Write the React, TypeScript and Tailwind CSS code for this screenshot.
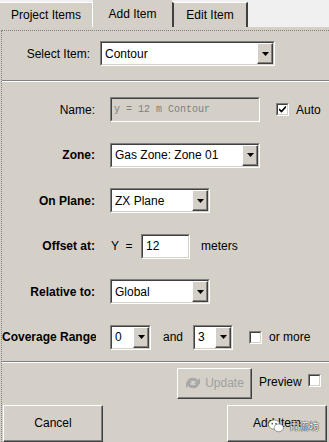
import type { ReactNode } from 'react'

const sunken =
  'border border-t-[#808080] border-l-[#808080] border-b-white border-r-white'
const sunkenInner =
  'border border-t-[#404040] border-l-[#404040] border-b-[#d4d0c8] border-r-[#d4d0c8]'
const raised =
  'border border-t-white border-l-white border-b-[#404040] border-r-[#404040] shadow-[inset_-1px_-1px_#808080] bg-[#d4d0c8]'

function Arrow() {
  return (
    <svg width="7" height="4" viewBox="0 0 7 4">
      <polygon points="0,0 7,0 3.5,4" fill="#000" />
    </svg>
  )
}

function Dropdown({ value, className }: { value: string; className: string }) {
  return (
    <div className={`${sunken} h-[25px] ${className}`}>
      <div className={`${sunkenInner} flex h-full bg-white`}>
        <span className="flex flex-1 items-center overflow-hidden whitespace-nowrap pl-[3px]">{value}</span>
        <div className={`${raised} flex w-[16px] items-center justify-center`}>
          <Arrow />
        </div>
      </div>
    </div>
  )
}

function Checkbox({ checked }: { checked?: boolean }) {
  return (
    <div className={`${sunken} h-[13px] w-[13px]`}>
      <div className={`${sunkenInner} flex h-full w-full items-center justify-center bg-white`}>
        {checked ? (
          <svg width="7" height="7" viewBox="0 0 7 7">
            <path d="M0 3 L2.5 5.5 L7 0.5" stroke="#000" strokeWidth="1.6" fill="none" />
          </svg>
        ) : null}
      </div>
    </div>
  )
}

function Row({ label, bold, children }: { label: string; bold?: boolean; children: ReactNode }) {
  return (
    <div className="flex h-[25px] items-center">
      <div
        className={`flex w-[94px] shrink-0 overflow-hidden whitespace-nowrap pr-[1px] ${
          label.length > 13 ? 'justify-start' : 'justify-end'
        } ${bold ? 'font-bold' : ''}`}
      >
        {label}
      </div>
      <div className="ml-[14px] flex items-center">{children}</div>
    </div>
  )
}

export default function App() {
  return (
    <div
      className="relative h-[442px] w-[329px] overflow-hidden bg-[#f0f0f0] text-[12px] text-black"
      style={{ fontFamily: '"Liberation Sans", Arial, sans-serif' }}
    >
      {/* tabs */}
      <div className="flex h-[27px] items-end">
        <div className="flex h-[25px] w-[93px] items-center justify-center border-t border-r border-white bg-[#d4d0c8]">
          Project Items
        </div>
        <div className="flex h-[27px] w-[79px] items-center justify-center bg-[#d4d0c8] pt-[1px]">Add Item</div>
        <div className="flex h-[25px] w-[76px] items-center justify-center border-t border-t-white border-x-[2px] border-x-[#404040] bg-[#d4d0c8]">
          Edit Item
        </div>
      </div>

      <div className="h-[415px] bg-[#d4d0c8] pt-[3px]">
        <div className="ml-[1px] h-full border-t border-l border-dotted border-[#808080]">
          {/* select item */}
          <div className="mt-[10px] flex h-[25px] items-center">
            <div className="flex w-[88px] justify-end">Select Item:</div>
            <Dropdown value="Contour" className="ml-[10px] w-[175px]" />
          </div>

          <div className="mt-[14px] h-[2px] border-t border-b border-t-[#808080] border-b-white" />

          {/* form */}
          <div className="mt-[15px] flex flex-col gap-[20.6px]">
            <Row label="Name:">
              <div className={`${sunken} h-[25px] w-[150px]`}>
                <div
                  className={`${sunkenInner} flex h-full items-center pl-[2px] text-[10px] text-[#808080]`}
                  style={{ fontFamily: '"Liberation Mono", "Courier New", monospace' }}
                >
                  y = 12 m Contour
                </div>
              </div>
              <div className="ml-[16px] flex items-center gap-[7px]">
                <Checkbox checked />
                <span>Auto</span>
              </div>
            </Row>
            <Row label="Zone:" bold>
              <Dropdown value="Gas Zone: Zone 01" className="w-[150px]" />
            </Row>
            <Row label="On Plane:" bold>
              <Dropdown value="ZX Plane" className="w-[100px]" />
            </Row>
            <Row label="Offset at:" bold>
              <span className="w-[31px] whitespace-pre pl-[1px]">Y  =</span>
              <div className={`${sunken} h-[25px] w-[49px]`}>
                <div className={`${sunkenInner} flex h-full items-center bg-white pl-[3px]`}>12</div>
              </div>
              <span className="ml-[11px]">meters</span>
            </Row>
            <Row label="Relative to:" bold>
              <Dropdown value="Global" className="w-[100px]" />
            </Row>
            <Row label="Coverage Range" bold>
              <Dropdown value="0" className="w-[41px]" />
              <span className="ml-[12px]">and</span>
              <Dropdown value="3" className="ml-[10px] w-[40px]" />
              <div className="ml-[16px] flex items-center gap-[7px]">
                <Checkbox />
                <span>or more</span>
              </div>
            </Row>
          </div>

          <div className="mt-[11px] h-[2px] border-t border-b border-t-[#808080] border-b-white" />

          {/* update row */}
          <div className="mt-[5px] flex h-[31px] items-center">
            <div className={`${raised} ml-[175px] flex h-[31px] w-[75px] items-center justify-center gap-[4px] text-[#a0a0a0]`}>
              <svg width="16" height="14" viewBox="0 0 16 14">
                <path d="M2 6 A6 5 0 0 1 13 4 L15 2 L15 8 L9 8 L11 6 A4 3 0 0 0 4 7 Z" fill="#a8a8a8" />
                <path d="M14 8 A6 5 0 0 1 3 10 L1 12 L1 6 L7 6 L5 8 A4 3 0 0 0 12 7 Z" fill="#a8a8a8" />
              </svg>
              <span>Update</span>
            </div>
            <span className="-mt-[3px] ml-[7px]">Preview</span>
            <div className="-mt-[5px] ml-[6px]">
              <Checkbox />
            </div>
          </div>

          {/* bottom buttons */}
          <div className="mt-[6px] flex h-[37px] items-center justify-between pr-[2px]">
            <div className={`${raised} ml-[1px] flex h-[37px] w-[100px] items-center justify-center`}>Cancel</div>
            <div className={`${raised} flex h-[37px] w-[100px] items-center justify-center`}>Add Item</div>
          </div>
        </div>
      </div>

      {/* watermark */}
      <div className="absolute left-[268px] top-[419px] flex items-center gap-[5px]">
        <svg width="16" height="14" viewBox="0 0 17 15">
          <ellipse cx="6.5" cy="6" rx="6" ry="5" fill="#fff" stroke="#555" strokeWidth="0.6" />
          <ellipse cx="11.5" cy="9.5" rx="5" ry="4.2" fill="#fff" stroke="#555" strokeWidth="0.6" />
          <circle cx="4.5" cy="5" r="0.9" fill="#555" />
          <circle cx="8.5" cy="5" r="0.9" fill="#555" />
        </svg>
        <span
          className="text-[10px] leading-none text-white [text-shadow:0_0_1px_#000,0_0_1px_#000]"
          style={{ fontFamily: '"Noto Sans CJK SC", sans-serif' }}
        >
          青流坊
        </span>
      </div>
    </div>
  )
}
